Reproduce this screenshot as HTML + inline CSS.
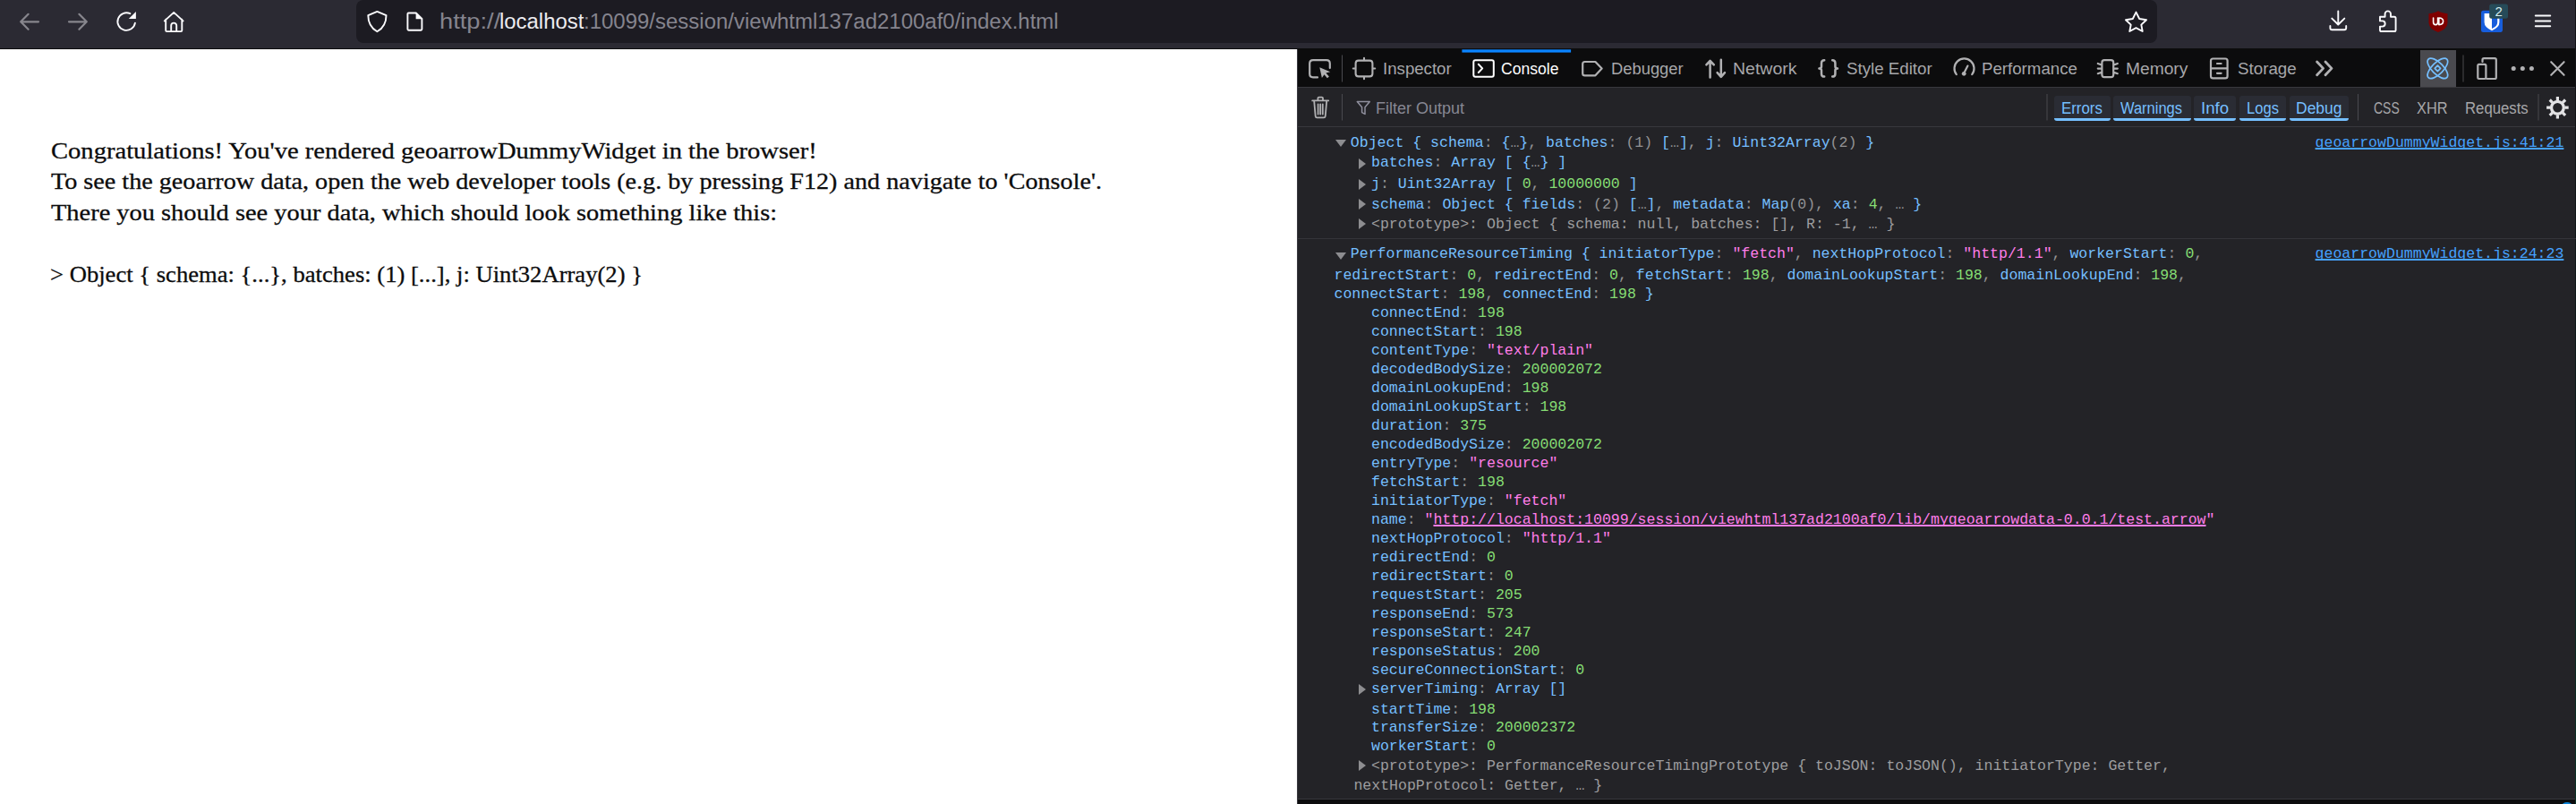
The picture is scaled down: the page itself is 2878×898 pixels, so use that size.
<!DOCTYPE html>
<html><head><meta charset="utf-8"><style>
html,body{margin:0;padding:0;width:2878px;height:898px;overflow:hidden;background:#232327;position:relative}
div{box-sizing:border-box}
.ml{position:absolute;white-space:pre;font-family:"Liberation Mono",monospace;font-size:16.55px;line-height:21px;color:#75bfff}
.tri{position:absolute;width:0;height:0}
.pt{position:absolute;left:57px;white-space:pre;font-family:"Liberation Serif",serif;font-size:26px;line-height:34px;color:#0c0c0d;transform-origin:0 0;-webkit-text-stroke:0.3px #0c0c0d}
.ui{position:absolute;white-space:pre;font-family:"Liberation Sans",sans-serif}
svg{position:absolute;overflow:visible}
</style></head><body>
<!-- browser toolbar -->
<div style="position:absolute;left:0;top:0;width:2878px;height:54px;background:#2b2a33"></div>
<div style="position:absolute;left:0;top:54px;width:2878px;height:1px;background:#0c0c0d"></div>
<div style="position:absolute;left:398px;top:0;width:2012px;height:48px;background:#1c1b22;border-radius:8px"></div>
<div class="ui" style="left:490.6px;top:9px;font-size:24.25px;line-height:30px;color:#85848e;transform-origin:0 0;transform:scaleX(1.125)">http://</div>
<div class="ui" style="left:558.2px;top:9px;font-size:24.25px;line-height:30px;color:#ececf0;transform-origin:0 0;transform:scaleX(0.986)">localhost</div>
<div class="ui" style="left:652.4px;top:9px;font-size:24.25px;line-height:30px;color:#85848e;transform-origin:0 0;transform:scaleX(0.989)">:10099/session/viewhtml137ad2100af0/index.html</div>
<!-- page -->
<div style="position:absolute;left:0;top:55px;width:1449px;height:843px;background:#ffffff"></div>

<div class="pt" style="top:152.22px;transform:scaleX(1.0994)">Congratulations! You've rendered geoarrowDummyWidget in the browser!</div>
<div class="pt" style="top:186.42px;transform:scaleX(1.083)">To see the geoarrow data, open the web developer tools (e.g. by pressing F12) and navigate to 'Console'.</div>
<div class="pt" style="top:220.53px;transform:scaleX(1.0927)">There you should see your data, which should look something like this:</div>
<div class="pt" style="left:56px;top:290.43px;transform:scaleX(1.0239)">&gt; Object { schema: {...}, batches: (1) [...], j: Uint32Array(2) }</div>

<!-- devtools -->
<div style="position:absolute;left:1449px;top:55px;width:1px;height:843px;background:#3a3940"></div>
<div style="position:absolute;left:1450px;top:54px;width:1428px;height:43px;background:#0c0c0d"></div>
<div style="position:absolute;left:1450px;top:97px;width:1428px;height:1px;background:#38383d"></div>
<div style="position:absolute;left:1450px;top:98px;width:1428px;height:43px;background:#232327"></div>
<div style="position:absolute;left:1450px;top:141px;width:1428px;height:1px;background:#38383d"></div>
<div style="position:absolute;left:1450px;top:892px;width:1428px;height:1px;background:#38383d"></div>
<div style="position:absolute;left:1450px;top:893px;width:1428px;height:5px;background:#0c0c0d"></div>
<div style="position:absolute;left:2877px;top:0;width:1px;height:898px;background:linear-gradient(#121215,#0c1c1c 55%,#0b3326)"></div>
<!-- text labels -->
<div class="ui" style="left:1545px;top:66px;font-size:18px;line-height:22px;transform-origin:0 0;transform:scaleX(1.036);color:#a7a7aa">Inspector</div>
<div class="ui" style="left:1677px;top:66px;font-size:18px;line-height:22px;transform-origin:0 0;transform:scaleX(0.975);color:#ffffff">Console</div>
<div class="ui" style="left:1800px;top:66px;font-size:18px;line-height:22px;transform-origin:0 0;transform:scaleX(1.02);color:#a7a7aa">Debugger</div>
<div class="ui" style="left:1936px;top:66px;font-size:18px;line-height:22px;transform-origin:0 0;transform:scaleX(1.083);color:#a7a7aa">Network</div>
<div class="ui" style="left:2063px;top:66px;font-size:18px;line-height:22px;transform-origin:0 0;transform:scaleX(1.039);color:#a7a7aa">Style Editor</div>
<div class="ui" style="left:2214px;top:66px;font-size:18px;line-height:22px;transform-origin:0 0;transform:scaleX(1.037);color:#a7a7aa">Performance</div>
<div class="ui" style="left:2375px;top:66px;font-size:18px;line-height:22px;transform-origin:0 0;transform:scaleX(1.067);color:#a7a7aa">Memory</div>
<div class="ui" style="left:2500px;top:66px;font-size:18px;line-height:22px;transform-origin:0 0;transform:scaleX(1.043);color:#a7a7aa">Storage</div>
<svg width="2878" height="898" style="left:0;top:0"><rect x="1633.4" y="55.3" width="121.7" height="3.3" fill="#0a84ff"/></svg>
<div style="position:absolute;left:2704px;top:56px;width:40px;height:41px;background:#4a4a4f"></div>
<!-- filter bar -->
<div class="ui" style="left:1537px;top:110px;font-size:18px;line-height:22px;transform-origin:0 0;transform:scaleX(1.0);color:#878793">Filter Output</div>
<div style="position:absolute;left:2295px;top:107px;width:63px;height:28px;background:#2a2c34;border-radius:3px;border-bottom:3px solid #75bfff"></div>
<div style="position:absolute;left:2361px;top:107px;width:87px;height:28px;background:#2a2c34;border-radius:3px;border-bottom:3px solid #75bfff"></div>
<div style="position:absolute;left:2451px;top:107px;width:47px;height:28px;background:#2a2c34;border-radius:3px;border-bottom:3px solid #75bfff"></div>
<div style="position:absolute;left:2502px;top:107px;width:52px;height:28px;background:#2a2c34;border-radius:3px;border-bottom:3px solid #75bfff"></div>
<div style="position:absolute;left:2558px;top:107px;width:66px;height:28px;background:#2a2c34;border-radius:3px;border-bottom:3px solid #75bfff"></div>
<div class="ui" style="left:2303px;top:110px;font-size:18px;line-height:22px;transform-origin:0 0;transform:scaleX(0.936);color:#75bfff">Errors</div>
<div class="ui" style="left:2369px;top:110px;font-size:18px;line-height:22px;transform-origin:0 0;transform:scaleX(0.916);color:#75bfff">Warnings</div>
<div class="ui" style="left:2459px;top:110px;font-size:18px;line-height:22px;transform-origin:0 0;transform:scaleX(1.036);color:#75bfff">Info</div>
<div class="ui" style="left:2510px;top:110px;font-size:18px;line-height:22px;transform-origin:0 0;transform:scaleX(0.92);color:#75bfff">Logs</div>
<div class="ui" style="left:2565px;top:110px;font-size:18px;line-height:22px;transform-origin:0 0;transform:scaleX(0.972);color:#75bfff">Debug</div>
<div class="ui" style="left:2652px;top:110px;font-size:18px;line-height:22px;transform-origin:0 0;transform:scaleX(0.775);color:#a7a7aa">CSS</div>
<div class="ui" style="left:2700px;top:110px;font-size:18px;line-height:22px;transform-origin:0 0;transform:scaleX(0.906);color:#a7a7aa">XHR</div>
<div class="ui" style="left:2754px;top:110px;font-size:18px;line-height:22px;transform-origin:0 0;transform:scaleX(0.93);color:#a7a7aa">Requests</div>
<svg width="2878" height="898" style="left:0;top:0" viewBox="0 0 2878 898" fill="none" stroke-linecap="round" stroke-linejoin="round">
 <!-- browser toolbar -->
 <g stroke="#87868d" stroke-width="2.2">
  <path d="M43,24.3 H23.2 M31.6,15.8 L23.2,24.3 L31.6,32.8"/>
  <path d="M77,24.3 H96.8 M88.4,15.8 L96.8,24.3 L88.4,32.8"/>
 </g>
 <g stroke="#fbfbfe" stroke-width="1.9">
  <path d="M150.9,25.6 A9.8,9.8 0 1 1 145.4,15.2"/>
  <path d="M183.8,23.4 L194.2,13.9 L204.6,23.4 M185.2,21.8 V34 Q185.2,35.1 186.4,35.1 H202.1 Q203.3,35.1 203.3,34 V21.8 M191.2,35 V28.6 A3,3 0 0 1 197.2,28.6 V35"/>
 </g>
 <path d="M143.8,20.9 L151.9,12.9 L151.9,20.9 Z" fill="#fbfbfe"/>
 <g stroke="#fbfbfe" stroke-width="1.9">
  <path d="M421.4,12.9 L431.5,17.2 Q431.5,29.5 421.4,35.3 Q411.3,29.5 411.3,17.2 Z"/>
  <path d="M456.5,14.5 H464.8 L471.4,21 V32.6 Q471.4,33.7 470.3,33.7 H456.5 Q455.4,33.7 455.4,32.6 V15.6 Q455.4,14.5 456.5,14.5 Z"/>
  <path d="M2386.5,13.6 L2390.2,21 L2398,22.2 L2392.3,27.6 L2393.7,35 L2386.5,31.2 L2379.3,35 L2380.7,27.6 L2375,22.2 L2382.8,21 Z"/>
  <path d="M2612.3,12.5 V27.3 M2605.3,20.6 L2612.3,27.5 L2619.3,20.6 M2603.4,29 V31.3 Q2603.4,33.3 2605.4,33.3 H2619.2 Q2621.2,33.3 2621.2,31.3 V29"/>
  <path d="M2659,18.8 H2664.6 V15.6 A3.2,3.2 0 0 1 2671,15.6 V18.8 H2675 Q2676.6,18.8 2676.6,20.4 V33.4 Q2676.6,35 2675,35 H2660.6 Q2659,35 2659,33.4 V29.6 H2661.6 A3.1,3.1 0 0 0 2661.6,23.4 H2659 Z"/>
  <path d="M2832.8,17.4 H2849.2 M2832.8,23.4 H2849.2 M2832.8,29.3 H2849.2" stroke-width="2"/>
 </g>
 <path d="M464.6,14.5 V21.2 H471.4 Z" fill="#fbfbfe"/>
 <!-- ublock -->
 <path d="M2724,12.3 Q2727,14.3 2734.5,15.2 V25.5 Q2734,32.5 2724,36 Q2714,32.5 2713.5,25.5 V15.2 Q2721,14.3 2724,12.3 Z" fill="#800000"/>
 <path d="M2718.6,20 V24.5 Q2718.6,27.6 2721.2,27.6 Q2723.6,27.6 2723.6,24.5 V20 M2724.8,20 V27.6 Q2729.6,27.6 2729.6,23.8 Q2729.6,20 2724.8,20" stroke="#fff" stroke-width="1.6"/>
 <!-- bitwarden -->
 <rect x="2772" y="11.8" width="24" height="24.2" rx="2.5" fill="#175ddc"/>
 <path d="M2775.6,15 H2792.4 V25 Q2792.4,30.5 2784,34.2 Q2775.6,30.5 2775.6,25 Z" fill="#fff"/>
 <path d="M2784,17 H2790.2 V25 Q2790.2,29.4 2784,32 Z" fill="#175ddc"/>
 <rect x="2781.2" y="4.4" width="20.8" height="16.4" rx="2.5" fill="#264b59"/>
 <text x="2791.6" y="18.2" font-family="Liberation Sans" font-size="15" fill="#d8eef0" text-anchor="middle" stroke="none">2</text>
 <!-- devtools toolbar icons -->
 <g stroke="#b1b1b3" stroke-width="2.2">
  <path d="M1472,86.4 H1467 Q1463.2,86.4 1463.2,82.6 V71 Q1463.2,67.2 1467,67.2 H1482 Q1485.8,67.2 1485.8,71 V76"/>
  <path d="M1517.8,67.6 H1530.2 Q1533.4,67.6 1533.4,70.8 V82.2 Q1533.4,85.4 1530.2,85.4 H1517.8 Q1514.6,85.4 1514.6,82.2 V70.8 Q1514.6,67.6 1517.8,67.6 Z M1524,64.8 V67.6 M1524,85.4 V88.2 M1511.8,76.5 H1514.6 M1533.4,76.5 H1536.2" stroke-width="2.1"/>
  <path d="M1770.6,69 H1782.4 L1789.6,76.6 L1782.4,84.3 H1770.6 Q1768.2,84.3 1768.2,81.9 V71.4 Q1768.2,69 1770.6,69 Z"/>
  <path d="M1910.6,86.5 V68.4 M1906.4,72.4 L1910.6,67.8 L1914.8,72.4 M1922.8,66.8 V85 M1918.6,81.2 L1922.8,85.8 L1927,81.2" stroke-width="2.5"/>
  <path stroke-width="2.5" d="M2038.2,67.2 Q2035,67.2 2035,70.5 V74.2 Q2035,76.4 2032.4,76.4 Q2035,76.4 2035,78.6 V82.4 Q2035,85.6 2038.2,85.6 M2047.2,67.2 Q2050.4,67.2 2050.4,70.5 V74.2 Q2050.4,76.4 2053,76.4 Q2050.4,76.4 2050.4,78.6 V82.4 Q2050.4,85.6 2047.2,85.6"/>
  <path d="M2185.8,83.2 A11,11 0 1 1 2203.2,83.2 M2194.2,81.8 L2198.4,73.6"/>
  <path d="M2351,67.2 H2358.6 Q2361.2,67.2 2361.2,69.8 V83.6 Q2361.2,86.2 2358.6,86.2 H2351 Q2348.4,86.2 2348.4,83.6 V69.8 Q2348.4,67.2 2351,67.2 Z M2343.8,71 L2348,72.5 M2343.8,76.6 H2348 M2343.8,82.2 L2348,80.8 M2365.8,71 L2361.6,72.5 M2365.8,76.6 H2361.6 M2365.8,82.2 L2361.6,80.8"/>
  <path d="M2472.4,65.5 H2486.2 Q2488.6,65.5 2488.6,67.9 V85 Q2488.6,87.4 2486.2,87.4 H2472.4 Q2470,87.4 2470,85 V67.9 Q2470,65.5 2472.4,65.5 Z M2470,76.4 H2488.6 M2477,71 H2481.6 M2477,81.8 H2481.6"/>
  <path d="M2588.6,69 L2595.6,76.4 L2588.6,83.8 M2598,69 L2605,76.4 L2598,83.8" stroke-width="2.8"/>
  <path d="M2773.5,69 V66.8 Q2773.5,65.2 2775.1,65.2 H2787.2 Q2788.8,65.2 2788.8,66.8 V86.4 Q2788.8,88 2787.2,88 H2778.5 M2769.7,71.8 H2776 Q2777.4,71.8 2777.4,73.2 V86.6 Q2777.4,88 2776,88 H2769.7 Q2768.3,88 2768.3,86.6 V73.2 Q2768.3,71.8 2769.7,71.8 Z"/>
  <path d="M2850.2,69.2 L2864.6,83.8 M2864.6,69.2 L2850.2,83.8" stroke-width="2.1"/>
 </g>
 <circle cx="2194.2" cy="82.3" r="2.4" fill="#b1b1b3"/>
 <path d="M1474.3,75.2 L1486.2,80.3 L1481.4,81.6 L1484.9,85.5 L1482.9,87.2 L1479.5,83.3 L1476.9,87 Z" fill="#b1b1b3"/>
 <g fill="#b1b1b3"><circle cx="2808.2" cy="76.6" r="2.5"/><circle cx="2818.3" cy="76.6" r="2.5"/><circle cx="2828.4" cy="76.6" r="2.5"/></g>
 <!-- console tab icon -->
 <path d="M1648.3,67.2 H1666.8 Q1668.8,67.2 1668.8,69.2 V83.8 Q1668.8,85.8 1666.8,85.8 H1648.3 Q1646.3,85.8 1646.3,83.8 V69.2 Q1646.3,67.2 1648.3,67.2 Z M1651.8,71.8 L1656.2,76.4 L1651.8,81" stroke="#ffffff" stroke-width="2"/>
 <!-- react atom -->
 <g stroke="#75bfff" stroke-width="1.7" transform="translate(2723.4,76.4)">
  <ellipse rx="14.6" ry="6.4" transform="rotate(45)"/>
  <ellipse rx="14.6" ry="6.4" transform="rotate(-45)"/>
  <path d="M0,-3.2 L3.2,0 L0,3.2 L-3.2,0 Z"/>
 </g>
 <!-- separators -->
 <g stroke="#4a4a4f" stroke-width="1" stroke-linecap="butt">
  <path d="M1499.5,61.5 V91.5 M2752,61.5 V91.5 M1499.5,105 V134.5 M2287,105 V134.5 M2634.5,105 V134.5 M2836,105 V134.5"/>
 </g>
 <!-- trash -->
 <g stroke="#b1b1b3" stroke-width="1.8">
  <path d="M1466.2,112.4 H1484.2 M1472.4,112 V109.8 Q1472.4,108.6 1473.6,108.6 H1476.8 Q1478,108.6 1478,109.8 V112 M1468.2,113 L1469.7,129.8 Q1469.9,131.3 1471.4,131.3 H1479 Q1480.5,131.3 1480.7,129.8 L1482.2,113 M1472.6,116.4 V127.6 M1475.2,116.4 V127.6 M1477.8,116.4 V127.6"/>
 </g>
 <path d="M1516.3,113.6 H1530.3 L1525,119.8 V127.4 L1521.6,125.6 V119.8 Z" stroke="#8f8f9d" stroke-width="1.5"/>
 <!-- gear -->
 <g transform="translate(2857.4,120.2)" stroke="#e3e3e5" stroke-linecap="butt">
  <circle r="6.9" stroke-width="3.3"/>
  <path d="M0,-8 V-12.3 M0,8 V12.3 M-8,0 H-12.3 M8,0 H12.3 M5.66,-5.66 L8.7,-8.7 M-5.66,5.66 L-8.7,8.7 M5.66,5.66 L8.7,8.7 M-5.66,-5.66 L-8.7,-8.7" stroke-width="3.2"/>
 </g>
</svg>

<svg width="2878" height="898" style="left:0;top:0"><ellipse cx="2868" cy="900" rx="6" ry="4" fill="#0b84d9"/></svg>
<div class="tri" style="left:1492px;top:156px;border-left:6.2px solid transparent;border-right:6.2px solid transparent;border-top:8px solid #8d8d90;"></div>
<div class="ml" style="left:1508.8px;top:148.70px;"><span style="color:#75bfff">Object</span> <span style="color:#75bfff">{</span> <span style="color:#75bfff">schema</span><span style="color:#939395">:</span> <span style="color:#75bfff">{</span><span style="color:#939395">…</span><span style="color:#75bfff">}</span><span style="color:#939395">,</span> <span style="color:#75bfff">batches</span><span style="color:#939395">:</span> <span style="color:#939395">(1)</span> <span style="color:#75bfff">[</span><span style="color:#939395">…</span><span style="color:#75bfff">]</span><span style="color:#939395">,</span> <span style="color:#75bfff">j</span><span style="color:#939395">:</span> <span style="color:#75bfff">Uint32Array</span><span style="color:#939395">(2)</span> <span style="color:#75bfff">}</span></div>
<div class="ml" style="left:2586.6px;top:149.00px;"><span style="color:#45a1ff;text-decoration:underline;text-underline-offset:1.2px;text-decoration-thickness:1.8px;text-decoration-skip-ink:none">geoarrowDummyWidget.js:41:21</span></div>
<div class="tri" style="left:1518px;top:176.9px;border-top:6.2px solid transparent;border-bottom:6.2px solid transparent;border-left:8px solid #8d8d90;"></div>
<div class="ml" style="left:1532px;top:170.70px;"><span style="color:#75bfff">batches</span><span style="color:#939395">:</span> <span style="color:#75bfff">Array</span> <span style="color:#75bfff">[</span> <span style="color:#75bfff">{</span><span style="color:#939395">…</span><span style="color:#75bfff">}</span> <span style="color:#75bfff">]</span></div>
<div class="tri" style="left:1518px;top:199.6px;border-top:6.2px solid transparent;border-bottom:6.2px solid transparent;border-left:8px solid #8d8d90;"></div>
<div class="ml" style="left:1532px;top:195.20px;"><span style="color:#75bfff">j</span><span style="color:#939395">:</span> <span style="color:#75bfff">Uint32Array</span> <span style="color:#75bfff">[</span> <span style="color:#86de74">0</span><span style="color:#939395">,</span> <span style="color:#86de74">10000000</span> <span style="color:#75bfff">]</span></div>
<div class="tri" style="left:1518px;top:222.0px;border-top:6.2px solid transparent;border-bottom:6.2px solid transparent;border-left:8px solid #8d8d90;"></div>
<div class="ml" style="left:1532px;top:217.70px;"><span style="color:#75bfff">schema</span><span style="color:#939395">:</span> <span style="color:#75bfff">Object</span> <span style="color:#75bfff">{</span> <span style="color:#75bfff">fields</span><span style="color:#939395">:</span> <span style="color:#939395">(2)</span> <span style="color:#75bfff">[</span><span style="color:#939395">…</span><span style="color:#75bfff">]</span><span style="color:#939395">,</span> <span style="color:#75bfff">metadata</span><span style="color:#939395">:</span> <span style="color:#75bfff">Map</span><span style="color:#939395">(0)</span><span style="color:#939395">,</span> <span style="color:#75bfff">xa</span><span style="color:#939395">:</span> <span style="color:#86de74">4</span><span style="color:#939395">,</span> <span style="color:#939395">…</span> <span style="color:#75bfff">}</span></div>
<div class="tri" style="left:1518px;top:244.3px;border-top:6.2px solid transparent;border-bottom:6.2px solid transparent;border-left:8px solid #8d8d90;"></div>
<div class="ml" style="left:1532px;top:240.00px;"><span style="color:#9d9d9f">&lt;prototype&gt;: Object { schema: null, batches: [], R: -1, … }</span></div>
<div style="position:absolute;left:1450px;top:266px;width:1428px;height:1px;background:#343439"></div>
<div class="tri" style="left:1492px;top:281.5px;border-left:6.2px solid transparent;border-right:6.2px solid transparent;border-top:8px solid #8d8d90;"></div>
<div class="ml" style="left:1508.8px;top:273.40px;"><span style="color:#75bfff">PerformanceResourceTiming</span> <span style="color:#75bfff">{</span> <span style="color:#75bfff">initiatorType</span><span style="color:#939395">:</span> <span style="color:#ff7de9">&quot;fetch&quot;</span><span style="color:#939395">,</span> <span style="color:#75bfff">nextHopProtocol</span><span style="color:#939395">:</span> <span style="color:#ff7de9">&quot;http/1.1&quot;</span><span style="color:#939395">,</span> <span style="color:#75bfff">workerStart</span><span style="color:#939395">:</span> <span style="color:#86de74">0</span><span style="color:#939395">,</span></div>
<div class="ml" style="left:2586.6px;top:273.00px;"><span style="color:#45a1ff;text-decoration:underline;text-underline-offset:1.2px;text-decoration-thickness:1.8px;text-decoration-skip-ink:none">geoarrowDummyWidget.js:24:23</span></div>
<div class="ml" style="left:1490.5px;top:296.70px;"><span style="color:#75bfff">redirectStart</span><span style="color:#939395">:</span> <span style="color:#86de74">0</span><span style="color:#939395">,</span> <span style="color:#75bfff">redirectEnd</span><span style="color:#939395">:</span> <span style="color:#86de74">0</span><span style="color:#939395">,</span> <span style="color:#75bfff">fetchStart</span><span style="color:#939395">:</span> <span style="color:#86de74">198</span><span style="color:#939395">,</span> <span style="color:#75bfff">domainLookupStart</span><span style="color:#939395">:</span> <span style="color:#86de74">198</span><span style="color:#939395">,</span> <span style="color:#75bfff">domainLookupEnd</span><span style="color:#939395">:</span> <span style="color:#86de74">198</span><span style="color:#939395">,</span></div>
<div class="ml" style="left:1490.5px;top:317.70px;"><span style="color:#75bfff">connectStart</span><span style="color:#939395">:</span> <span style="color:#86de74">198</span><span style="color:#939395">,</span> <span style="color:#75bfff">connectEnd</span><span style="color:#939395">:</span> <span style="color:#86de74">198</span> <span style="color:#75bfff">}</span></div>
<div class="ml" style="left:1532px;top:339.40px;"><span style="color:#75bfff">connectEnd</span><span style="color:#939395">: </span><span style="color:#86de74">198</span></div>
<div class="ml" style="left:1532px;top:360.40px;"><span style="color:#75bfff">connectStart</span><span style="color:#939395">: </span><span style="color:#86de74">198</span></div>
<div class="ml" style="left:1532px;top:381.40px;"><span style="color:#75bfff">contentType</span><span style="color:#939395">: </span><span style="color:#ff7de9">&quot;text/plain&quot;</span></div>
<div class="ml" style="left:1532px;top:402.40px;"><span style="color:#75bfff">decodedBodySize</span><span style="color:#939395">: </span><span style="color:#86de74">200002072</span></div>
<div class="ml" style="left:1532px;top:423.40px;"><span style="color:#75bfff">domainLookupEnd</span><span style="color:#939395">: </span><span style="color:#86de74">198</span></div>
<div class="ml" style="left:1532px;top:444.40px;"><span style="color:#75bfff">domainLookupStart</span><span style="color:#939395">: </span><span style="color:#86de74">198</span></div>
<div class="ml" style="left:1532px;top:465.40px;"><span style="color:#75bfff">duration</span><span style="color:#939395">: </span><span style="color:#86de74">375</span></div>
<div class="ml" style="left:1532px;top:486.40px;"><span style="color:#75bfff">encodedBodySize</span><span style="color:#939395">: </span><span style="color:#86de74">200002072</span></div>
<div class="ml" style="left:1532px;top:507.40px;"><span style="color:#75bfff">entryType</span><span style="color:#939395">: </span><span style="color:#ff7de9">&quot;resource&quot;</span></div>
<div class="ml" style="left:1532px;top:528.40px;"><span style="color:#75bfff">fetchStart</span><span style="color:#939395">: </span><span style="color:#86de74">198</span></div>
<div class="ml" style="left:1532px;top:549.40px;"><span style="color:#75bfff">initiatorType</span><span style="color:#939395">: </span><span style="color:#ff7de9">&quot;fetch&quot;</span></div>
<div class="ml" style="left:1532px;top:570.40px;"><span style="color:#75bfff">name</span><span style="color:#939395">: </span><span style="color:#ff7de9">&quot;</span><span style="color:#ff7de9;text-decoration:underline;text-underline-offset:1.2px;text-decoration-thickness:1.8px;text-decoration-skip-ink:none">http://localhost:10099/session/viewhtml137ad2100af0/lib/mygeoarrowdata-0.0.1/test.arrow</span><span style="color:#ff7de9">&quot;</span></div>
<div class="ml" style="left:1532px;top:591.40px;"><span style="color:#75bfff">nextHopProtocol</span><span style="color:#939395">: </span><span style="color:#ff7de9">&quot;http/1.1&quot;</span></div>
<div class="ml" style="left:1532px;top:612.40px;"><span style="color:#75bfff">redirectEnd</span><span style="color:#939395">: </span><span style="color:#86de74">0</span></div>
<div class="ml" style="left:1532px;top:633.40px;"><span style="color:#75bfff">redirectStart</span><span style="color:#939395">: </span><span style="color:#86de74">0</span></div>
<div class="ml" style="left:1532px;top:654.40px;"><span style="color:#75bfff">requestStart</span><span style="color:#939395">: </span><span style="color:#86de74">205</span></div>
<div class="ml" style="left:1532px;top:675.40px;"><span style="color:#75bfff">responseEnd</span><span style="color:#939395">: </span><span style="color:#86de74">573</span></div>
<div class="ml" style="left:1532px;top:696.40px;"><span style="color:#75bfff">responseStart</span><span style="color:#939395">: </span><span style="color:#86de74">247</span></div>
<div class="ml" style="left:1532px;top:717.40px;"><span style="color:#75bfff">responseStatus</span><span style="color:#939395">: </span><span style="color:#86de74">200</span></div>
<div class="ml" style="left:1532px;top:738.40px;"><span style="color:#75bfff">secureConnectionStart</span><span style="color:#939395">: </span><span style="color:#86de74">0</span></div>
<div class="tri" style="left:1518px;top:763.5px;border-top:6.2px solid transparent;border-bottom:6.2px solid transparent;border-left:8px solid #8d8d90;"></div>
<div class="ml" style="left:1532px;top:759.10px;"><span style="color:#75bfff">serverTiming</span><span style="color:#939395">:</span> <span style="color:#75bfff">Array</span> <span style="color:#75bfff">[</span><span style="color:#75bfff">]</span></div>
<div class="ml" style="left:1532px;top:781.50px;"><span style="color:#75bfff">startTime</span><span style="color:#939395">: </span><span style="color:#86de74">198</span></div>
<div class="ml" style="left:1532px;top:802.40px;"><span style="color:#75bfff">transferSize</span><span style="color:#939395">: </span><span style="color:#86de74">200002372</span></div>
<div class="ml" style="left:1532px;top:823.40px;"><span style="color:#75bfff">workerStart</span><span style="color:#939395">: </span><span style="color:#86de74">0</span></div>
<div class="tri" style="left:1518px;top:848.6px;border-top:6.2px solid transparent;border-bottom:6.2px solid transparent;border-left:8px solid #8d8d90;"></div>
<div class="ml" style="left:1532px;top:844.50px;"><span style="color:#9d9d9f">&lt;prototype&gt;: PerformanceResourceTimingPrototype { toJSON: toJSON(), initiatorType: Getter,</span></div>
<div class="ml" style="left:1512.4px;top:867.10px;"><span style="color:#9d9d9f">nextHopProtocol: Getter, … }</span></div>

</body></html>
